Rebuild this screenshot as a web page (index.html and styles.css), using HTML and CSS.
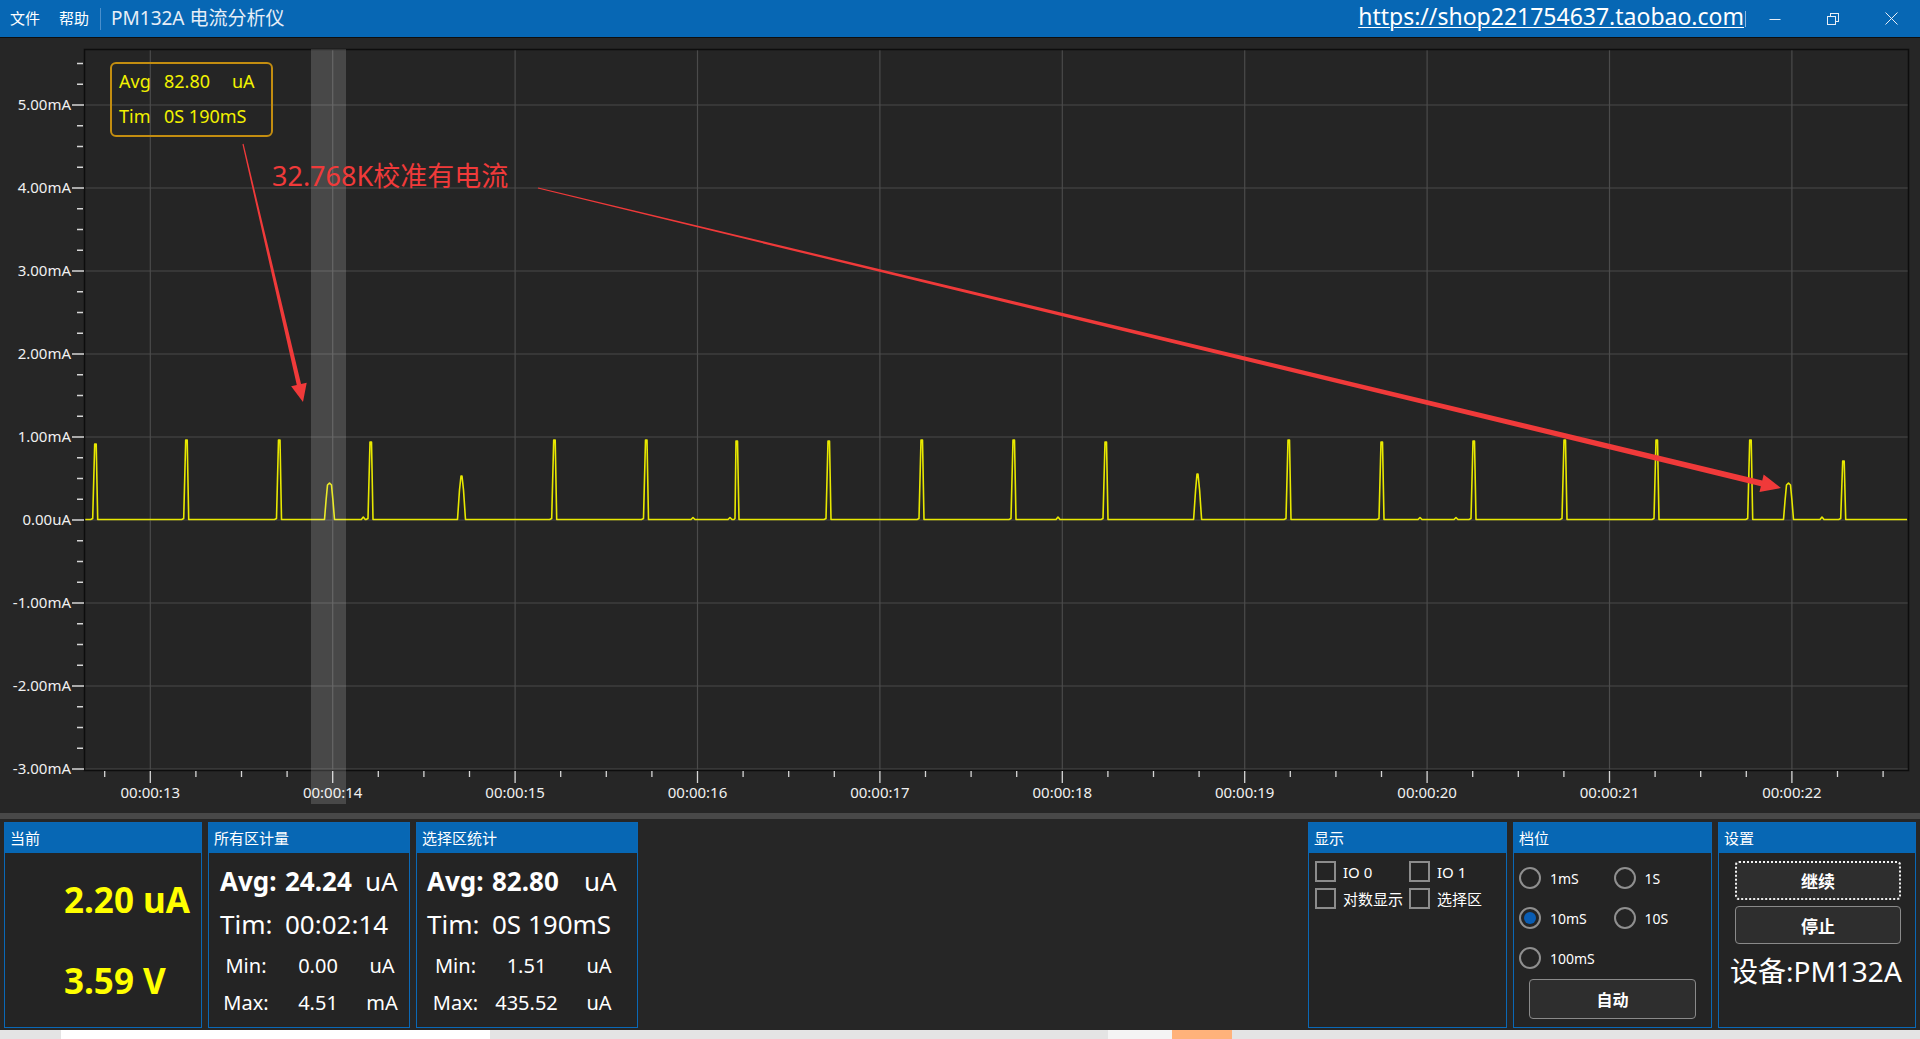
FILE: index.html
```html
<!DOCTYPE html>
<html lang="zh-CN">
<head>
<meta charset="utf-8">
<title>PM132A 电流分析仪</title>
<link rel="stylesheet" href="styles.css">
</head>
<body>
<div class="app">
  <header class="titlebar">
    <nav class="menu"><span class="menu-item">文件</span><span class="menu-item">帮助</span></nav>
    <span class="title-sep"></span>
    <span class="app-title">PM132A 电流分析仪</span>
    <a class="shop-link">https://shop221754637.taobao.com</a>
    <span class="caret"></span>
    <div class="win-controls">
      <span class="win-btn"><svg width="12" height="12" viewBox="0 0 12 12"><line x1="0.5" y1="6.5" x2="11.5" y2="6.5" stroke="#e8eef6" stroke-width="1"/></svg></span>
      <span class="win-btn"><svg width="12" height="12" viewBox="0 0 12 12"><rect x="3.5" y="0.5" width="8" height="8" fill="none" stroke="#e8eef6"/><rect x="0.5" y="3.5" width="8" height="8" fill="#0767b4" stroke="#e8eef6"/></svg></span>
      <span class="win-btn"><svg width="13" height="13" viewBox="0 0 13 13"><path d="M0.5 0.5L12.5 12.5M12.5 0.5L0.5 12.5" stroke="#e8eef6" stroke-width="1"/></svg></span>
    </div>
  </header>

  <svg class="chart" width="1920" height="775" viewBox="0 38 1920 775">
    <rect class="plot-bg" x="84" y="49" width="1824" height="721"/>
    <path class="grid" d="M85 105H1908M85 188H1908M85 271H1908M85 354H1908M85 437H1908M85 520H1908M85 603H1908M85 686H1908M85 769H1908
      M150.3 49V770M332.7 49V770M515.1 49V770M697.5 49V770M879.9 49V770M1062.3 49V770M1244.7 49V770M1427.1 49V770M1609.5 49V770M1791.9 49V770"/>
    <path class="trace" d="M85 519.5
      L90.7 519.5 L92.7 518.5 L94.7 444 L96.2 444 L97.7 519.5
      L181.7 519.5 L183.7 518.5 L185.7 440 L187.2 440 L188.7 519.5
      L274.5 519.5 L276.5 518.5 L278.5 440 L280 440 L281.5 519.5
      L324.5 519.5 L326 501 L327.5 485 L329.5 483 L331.5 485 L333 501 L334.5 519.5
      L361.3 519.5 L363.3 517 L365.3 519.5
      L366 519.5 L368 518.5 L370 442 L371.5 442 L373 519.5
      L457.5 519.5 L459.5 490 L461 476 L462 476 L463.5 490 L465.5 519.5
      L549.7 519.5 L551.7 518.5 L553.7 440 L555.2 440 L556.7 519.5
      L641.5 519.5 L643.5 518.5 L645.5 440 L647 440 L648.5 519.5
      L691 519.5 L693 517.5 L695 519.5
      L728 519.5 L730 517.5 L732 519.5
      L734 519.5 L735 518.5 L736 441 L737.5 441 L739 519.5
      L824 519.5 L826 518.5 L828 441 L829.5 441 L831 519.5
      L917 519.5 L919 518.5 L921 440 L922.5 440 L924 519.5
      L1009 519.5 L1011 518.5 L1013 440 L1014.5 440 L1016 519.5
      L1056 519.5 L1058 517 L1060 519.5
      L1101 519.5 L1103 518.5 L1105 442 L1106.5 442 L1108 519.5
      L1193.6 519.5 L1195.6 490 L1197 474 L1198 474 L1199.6 490 L1201.6 519.5
      L1284 519.5 L1286 518.5 L1288 440 L1289.5 440 L1291 519.5
      L1377 519.5 L1379 518.5 L1381 442 L1382.5 442 L1384 519.5
      L1418 519.5 L1420 517.5 L1422 519.5
      L1454 519.5 L1456 517.5 L1458 519.5
      L1469 519.5 L1471 518.5 L1473 441 L1474.5 441 L1476 519.5
      L1560 519.5 L1562 518.5 L1564 440 L1565.5 440 L1567 519.5
      L1652 519.5 L1654 518.5 L1656 440 L1657.5 440 L1659 519.5
      L1745.7 519.5 L1747.7 518.5 L1749.7 440 L1751.2 440 L1752.7 519.5
      L1783.5 519.5 L1785 501 L1786.5 485 L1788.5 483 L1790.5 485 L1792 501 L1793.5 519.5
      L1820 519.5 L1822 517 L1824 519.5
      L1838.7 519.5 L1840.7 518.5 L1842.7 461 L1844.2 461 L1845.7 519.5
      L1907 519.5"/>
    <rect class="plot-border" x="84.5" y="49.5" width="1824" height="721"/>

    <path class="tick" d="M72 769H84M72 686H84M72 603H84M72 520H84M72 437H84M72 354H84M72 271H84M72 188H84M72 105H84
      M77 748.25H83M77 727.5H83M77 706.75H83M77 665.25H83M77 644.5H83M77 623.75H83M77 582.25H83M77 561.5H83M77 540.75H83
      M77 499.25H83M77 478.5H83M77 457.75H83M77 416.25H83M77 395.5H83M77 374.75H83M77 333.25H83M77 312.5H83M77 291.75H83
      M77 250.25H83M77 229.5H83M77 208.75H83M77 167.25H83M77 146.5H83M77 125.75H83M77 84.25H83M77 63.5H83
      M150.3 771V783M332.7 771V783M515.1 771V783M697.5 771V783M879.9 771V783M1062.3 771V783M1244.7 771V783M1427.1 771V783M1609.5 771V783M1791.9 771V783
      M104.7 771V777M195.9 771V777M241.5 771V777M287.1 771V777M378.3 771V777M423.9 771V777M469.5 771V777M560.7 771V777M606.3 771V777M651.9 771V777
      M743.1 771V777M788.7 771V777M834.3 771V777M925.5 771V777M971.1 771V777M1016.7 771V777M1107.9 771V777M1153.5 771V777M1199.1 771V777
      M1290.3 771V777M1335.9 771V777M1381.5 771V777M1472.7 771V777M1518.3 771V777M1563.9 771V777M1655.1 771V777M1700.7 771V777M1746.3 771V777
      M1837.5 771V777M1883.1 771V777"/>

    <g class="ylab">
      <text x="71" y="110">5.00mA</text>
      <text x="71" y="193">4.00mA</text>
      <text x="71" y="276">3.00mA</text>
      <text x="71" y="359">2.00mA</text>
      <text x="71" y="442">1.00mA</text>
      <text x="71" y="525">0.00uA</text>
      <text x="71" y="608">-1.00mA</text>
      <text x="71" y="691">-2.00mA</text>
      <text x="71" y="774">-3.00mA</text>
    </g>
    <g class="xlab">
      <text x="150.3" y="798">00:00:13</text>
      <text x="332.7" y="798">00:00:14</text>
      <text x="515.1" y="798">00:00:15</text>
      <text x="697.5" y="798">00:00:16</text>
      <text x="879.9" y="798">00:00:17</text>
      <text x="1062.3" y="798">00:00:18</text>
      <text x="1244.7" y="798">00:00:19</text>
      <text x="1427.1" y="798">00:00:20</text>
      <text x="1609.5" y="798">00:00:21</text>
      <text x="1791.9" y="798">00:00:22</text>
    </g>

    <rect class="selection" x="311" y="49" width="35" height="755"/>

    <rect class="tip-box" x="111" y="63" width="161" height="73" rx="5"/>
    <g class="tip-text">
      <text x="119" y="88">Avg</text><text x="164" y="88">82.80</text><text x="232" y="88">uA</text>
      <text x="119" y="123">Tim</text><text x="164" y="123">0S 190mS</text>
    </g>

    <text class="note" x="272" y="186">32.768K校准有电流</text>
    <polygon class="arrow" points="242.42,144.14 296.78,384.97 291.13,386.28 303,402 306.71,382.66 301.06,383.97 243.58,143.86"/>
    <polygon class="arrow" points="537.86,188.58 1760.86,486.23 1759.45,492.06 1781,488 1763.67,474.56 1762.26,480.39 538.14,187.42"/>
  </svg>

  <div class="splitter"></div>

  <section class="panels">
    <div class="panel panel-current">
      <div class="panel-head">当前</div>
      <div class="panel-body current-body">
        <div class="big-reading">2.20 uA</div>
        <div class="big-reading">3.59 V</div>
      </div>
    </div>

    <div class="panel panel-all">
      <div class="panel-head">所有区计量</div>
      <div class="panel-body stats">
        <div class="stat-row main"><span class="b">Avg:</span><span class="b">24.24</span><span>uA</span></div>
        <div class="stat-row main"><span>Tim:</span><span>00:02:14</span></div>
        <div class="stat-row minor"><span>Min:</span><span>0.00</span><span>uA</span></div>
        <div class="stat-row minor"><span>Max:</span><span>4.51</span><span>mA</span></div>
      </div>
    </div>

    <div class="panel panel-sel">
      <div class="panel-head">选择区统计</div>
      <div class="panel-body stats">
        <div class="stat-row main"><span class="b">Avg:</span><span class="b">82.80</span><span>uA</span></div>
        <div class="stat-row main"><span>Tim:</span><span>0S 190mS</span></div>
        <div class="stat-row minor"><span>Min:</span><span>1.51</span><span>uA</span></div>
        <div class="stat-row minor"><span>Max:</span><span>435.52</span><span>uA</span></div>
      </div>
    </div>

    <div class="panel panel-display">
      <div class="panel-head">显示</div>
      <div class="panel-body checks">
        <label class="check"><span class="box"></span>IO 0</label>
        <label class="check"><span class="box"></span>IO 1</label>
        <label class="check"><span class="box"></span>对数显示</label>
        <label class="check"><span class="box"></span>选择区</label>
      </div>
    </div>

    <div class="panel panel-range">
      <div class="panel-head">档位</div>
      <div class="panel-body">
        <div class="radios">
          <label class="radio"><span class="dot"></span>1mS</label>
          <label class="radio"><span class="dot"></span>1S</label>
          <label class="radio"><span class="dot on"></span>10mS</label>
          <label class="radio"><span class="dot"></span>10S</label>
          <label class="radio"><span class="dot"></span>100mS</label>
        </div>
        <div class="btn btn-auto">自动</div>
      </div>
    </div>

    <div class="panel panel-set">
      <div class="panel-head">设置</div>
      <div class="panel-body settings">
        <div class="btn btn-focus">继续</div>
        <div class="btn btn-stop">停止</div>
        <div class="device">设备:PM132A</div>
      </div>
    </div>
  </section>

  <div class="taskbar">
    <span class="tb-white"></span>
    <span class="tb-light"></span>
    <span class="tb-orange"></span>
  </div>
</div>
</body>
</html>
```

FILE: styles.css
```css
html, body {
  margin: 0;
  padding: 0;
}

body {
  width: 1920px;
  height: 1039px;
  overflow: hidden;
  background: #262626;
  color: #ffffff;
  font-family: "Noto Sans", "Noto Sans CJK SC", sans-serif;
}

.app {
  display: flex;
  flex-direction: column;
  width: 1920px;
  height: 1039px;
}

/* ---------- title bar ---------- */
.titlebar {
  height: 37px;
  flex: 0 0 37px;
  background: #0767b4;
  border-bottom: 1px solid #0e0e0e;
  display: flex;
  align-items: center;
  padding-left: 10px;
}

.menu {
  display: flex;
  gap: 19px;
}

.menu-item {
  font-size: 15px;
  line-height: 37px;
  color: #ffffff;
}

.title-sep {
  width: 1px;
  height: 22px;
  background: #4a8fcc;
  margin-left: 11px;
}

.app-title {
  margin-left: 10px;
  font-size: 19px;
  color: #e6eef7;
  line-height: 37px;
}

.shop-link {
  margin-left: auto;
  font-size: 23px;
  line-height: 30px;
  color: #ffffff;
  text-decoration: underline;
  text-decoration-thickness: 1px;
  text-underline-offset: 2px;
  margin-top: -6px;
}

.caret {
  width: 1px;
  height: 16px;
  background: #8fb8e0;
  margin-left: 1px;
}

.win-controls {
  display: flex;
  height: 37px;
}

.win-btn {
  width: 58px;
  display: flex;
  align-items: center;
  justify-content: center;
}

/* ---------- chart ---------- */
.chart {
  display: block;
  flex: 0 0 775px;
}

.plot-bg {
  fill: #252525;
}

.grid {
  fill: none;
  stroke: #4b4b4b;
  stroke-width: 1.2;
}

.plot-border {
  fill: none;
  stroke: #0d0d0d;
  stroke-width: 1.5;
}

.trace {
  fill: none;
  stroke: #e8e800;
  stroke-width: 1.6;
  stroke-linejoin: round;
}

.tick {
  fill: none;
  stroke: #d6d6d6;
  stroke-width: 1.3;
}

.ylab text {
  font-size: 15px;
  fill: #f0f0f0;
  text-anchor: end;
}

.xlab text {
  font-size: 15px;
  fill: #f0f0f0;
  text-anchor: middle;
}

.selection {
  fill: rgba(255, 255, 255, 0.16);
}

.tip-box {
  fill: none;
  stroke: #c38d10;
  stroke-width: 2;
}

.tip-text text {
  font-size: 18px;
  fill: #f2f200;
}

.note {
  font-size: 27px;
  fill: #f03a3a;
}

.arrow {
  fill: #f03a3a;
}

/* ---------- splitter ---------- */
.splitter {
  flex: 0 0 6px;
  background: #484848;
}

/* ---------- panels ---------- */
.panels {
  flex: 0 0 206px;
  padding: 3px 4px 2px;
  display: flex;
  gap: 6px;
}

.panel {
  border: 1px solid #0a68b6;
  display: flex;
  flex-direction: column;
  background: #242424;
  box-sizing: border-box;
}

.panel-current { width: 198px; }
.panel-all { width: 202px; }
.panel-sel { width: 222px; }
.panel-display { width: 199px; margin-left: auto; }
.panel-range { width: 199px; }
.panel-set { width: 198px; }

.panel-head {
  height: 30px;
  flex: 0 0 30px;
  background: #0767b4;
  font-size: 15px;
  line-height: 30px;
  padding-left: 5px;
  color: #ffffff;
}

.panel-body {
  flex: 1;
}

.current-body {
  padding: 25px 0 0 59px;
  display: flex;
  flex-direction: column;
  gap: 37px;
}

.big-reading {
  font-size: 35px;
  font-weight: 700;
  line-height: 44px;
  color: #ffff00;
  white-space: nowrap;
}

.stats {
  padding-top: 6px;
  display: grid;
  grid-template-rows: 43px 43px 40px 34px;
}

.stat-row {
  display: grid;
  align-items: center;
  white-space: nowrap;
}

.stat-row.main {
  font-size: 26px;
}

.stat-row.minor {
  font-size: 20px;
  text-align: center;
}

.b {
  font-weight: 700;
}

.panel-all .main {
  padding-left: 11px;
  grid-template-columns: 65px 80px auto;
}

.panel-sel .main {
  padding-left: 10px;
  grid-template-columns: 65px 92px auto;
}

.panel-all .minor {
  grid-template-columns: 74px 70px 58px;
}

.panel-sel .minor {
  grid-template-columns: 77px 65px 80px;
}

/* checkboxes */
.checks {
  padding: 8px 0 0 6px;
  display: grid;
  grid-template-columns: 94px 94px;
  grid-auto-rows: 21px;
  row-gap: 6px;
  align-content: start;
}

.check {
  display: flex;
  align-items: center;
  gap: 7px;
  font-size: 15px;
  color: #ffffff;
  white-space: nowrap;
}

.box {
  width: 17px;
  height: 17px;
  border: 2px solid #8c8c8c;
  flex: 0 0 auto;
}

/* radios */
.radios {
  padding: 5px 0 0 5px;
  display: grid;
  grid-template-columns: 94.5px 94.5px;
  grid-auto-rows: 40px;
}

.radio {
  display: flex;
  align-items: center;
  gap: 9px;
  font-size: 14px;
  color: #ffffff;
}

.dot {
  width: 18px;
  height: 18px;
  border: 2px solid #8f8f8f;
  border-radius: 50%;
  display: flex;
  align-items: center;
  justify-content: center;
  flex: 0 0 auto;
}

.dot.on::after {
  content: "";
  width: 12px;
  height: 12px;
  border-radius: 50%;
  background: #0a5db3;
}

/* buttons */
.btn {
  box-sizing: border-box;
  display: flex;
  align-items: center;
  justify-content: center;
  background: #2e2e2e;
  border: 1px solid #8a8a8a;
  border-radius: 4px;
  font-size: 17px;
  font-weight: 700;
  color: #ffffff;
}

.btn-auto {
  width: 167px;
  height: 40px;
  margin: 1px 0 0 15px;
  font-size: 16px;
}

.settings {
  padding: 8px 0 0 16px;
}

.btn-focus {
  width: 166px;
  height: 39px;
  border: 2px dotted #f2f2f2;
}

.btn-stop {
  width: 166px;
  height: 38px;
  margin-top: 6px;
}

.device {
  margin: 7px 0 0 -5px;
  font-size: 28px;
  line-height: 40px;
  color: #ffffff;
  white-space: nowrap;
}

/* ---------- taskbar peek ---------- */
.taskbar {
  flex: 0 0 9px;
  background: #e4e4e4;
  display: flex;
}

.tb-white {
  margin-left: 61px;
  width: 429px;
  background: #ffffff;
}

.tb-light {
  margin-left: 618px;
  width: 64px;
  background: #f4f4f4;
}

.tb-orange {
  width: 60px;
  background: #ffb27a;
}
```
